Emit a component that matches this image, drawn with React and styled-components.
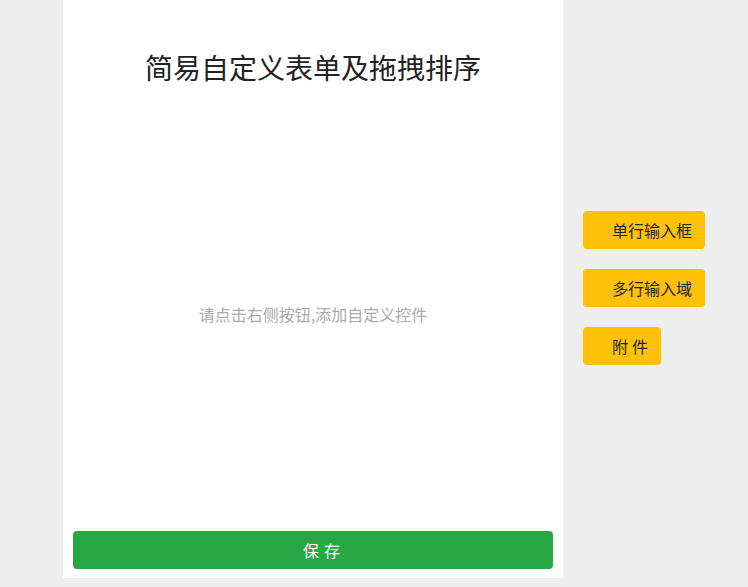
import React from "react";
import styled, { createGlobalStyle } from "styled-components";

const Global = createGlobalStyle`
  html, body { margin: 0; padding: 0; background: #eeeeee; }
  body { font-family: "Noto Sans CJK SC", "Noto Sans", sans-serif; }
  * { box-sizing: border-box; }
`;

const Page = styled.div`
  display: flex;
  align-items: center;
  padding-left: 63px;
  height: 578px;
`;

const Panel = styled.div`
  width: 500px;
  height: 578px;
  background: #ffffff;
  display: flex;
  flex-direction: column;
  padding: 0 10px 9px;
`;

const Title = styled.h1`
  margin: 0;
  padding-top: 46px;
  font-size: 28px;
  line-height: 42px;
  font-weight: 400;
  color: #222;
  text-align: center;
`;

const Empty = styled.div`
  flex: 1;
  display: flex;
  align-items: center;
  justify-content: center;
  padding-top: 9px;
  font-size: 16px;
  color: #aaaaaa;
`;

const SaveButton = styled.button`
  height: 38px;
  width: 100%;
  border: none;
  border-radius: 4px;
  background: #28a745;
  color: #fff;
  font-family: inherit;
  font-size: 16px;
  letter-spacing: 5px;
  text-indent: 22px;
  cursor: pointer;
`;

const Side = styled.div`
  display: flex;
  flex-direction: column;
  align-items: flex-start;
  gap: 20px;
  margin-left: 20px;
  padding-bottom: 2px;
`;

const ToolButton = styled.button`
  height: 38px;
  padding: 0 ${(p) => (p.$spaced ? "9px" : "13px")} 0 29px;
  border: none;
  border-radius: 4px;
  background: #ffc107;
  color: #212529;
  font-family: inherit;
  font-size: 16px;
  letter-spacing: ${(p) => (p.$spaced ? "4px" : "0")};
  cursor: pointer;
`;

export default function App() {
  return (
    <>
      <Global />
      <Page>
        <Panel>
          <Title>简易自定义表单及拖拽排序</Title>
          <Empty>请点击右侧按钮,添加自定义控件</Empty>
          <SaveButton>保存</SaveButton>
        </Panel>
        <Side>
          <ToolButton>单行输入框</ToolButton>
          <ToolButton>多行输入域</ToolButton>
          <ToolButton $spaced>附件</ToolButton>
        </Side>
      </Page>
    </>
  );
}
